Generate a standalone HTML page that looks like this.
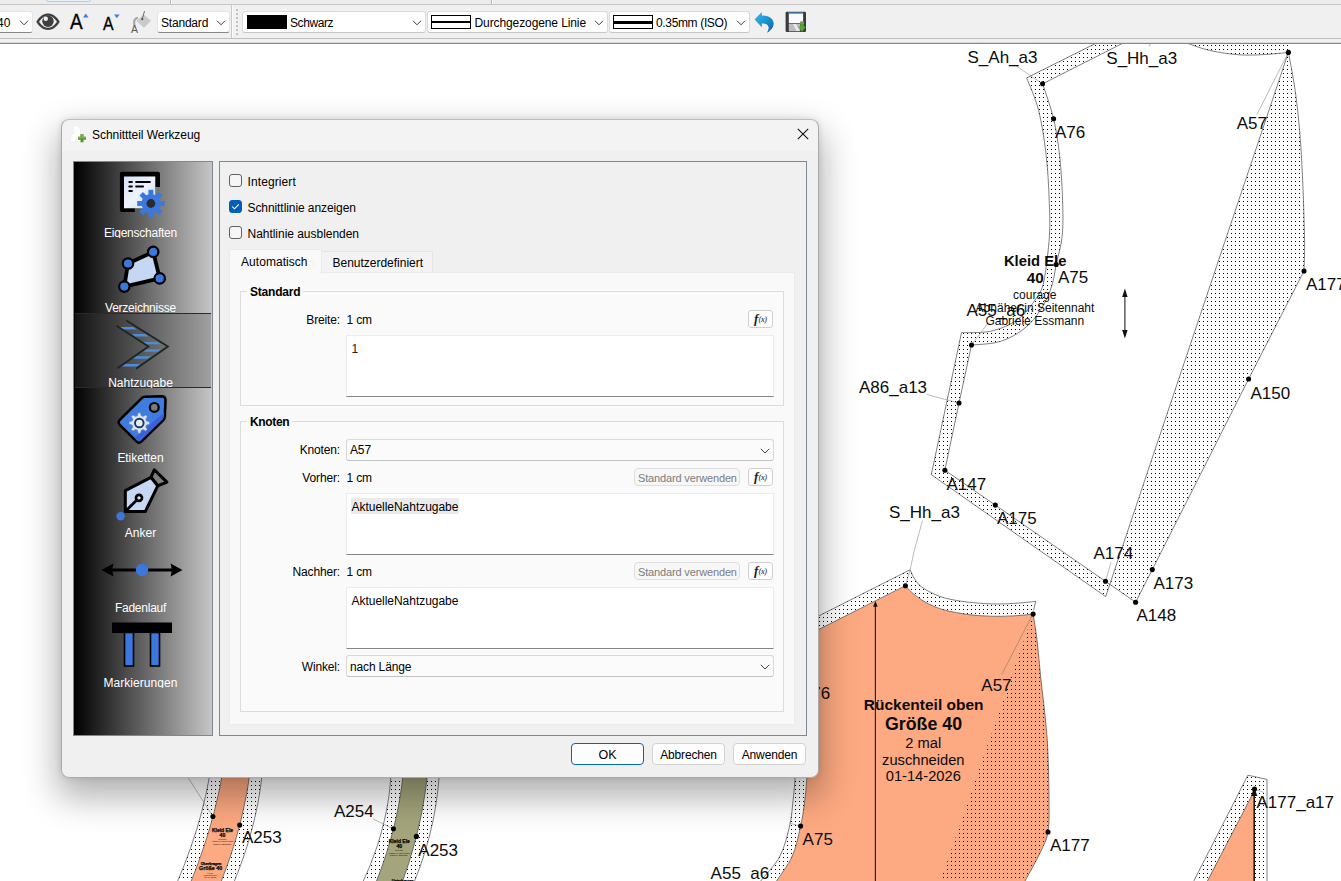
<!DOCTYPE html>
<html lang="de">
<head>
<meta charset="utf-8">
<title>Schnittteil Werkzeug</title>
<style>
*{box-sizing:border-box;margin:0;padding:0}
html,body{width:1341px;height:881px;overflow:hidden;background:#fff}
body{position:relative;font-family:"Liberation Sans",sans-serif;font-size:12px;color:#000}
.abs{position:absolute}
.t{position:absolute;white-space:nowrap;line-height:14px;height:14px}
/* toolbar */
#tb{position:absolute;left:0;top:0;width:1341px;height:44px;background:#f0f0f0}
#tb .combo{position:absolute;background:#fff;border:1px solid #dadada;border-bottom-color:#c6c6c6;border-radius:3px;height:22px}
#tb .combo.ed{border-color:#e6e6e6;border-bottom-color:#868686}
/* canvas */
#cv{position:absolute;left:0;top:0;width:1341px;height:881px}
#cv text{font-family:"Liberation Sans",sans-serif}
/* dialog */
#dlg{position:absolute;left:61px;top:119px;width:758px;height:659px;background:linear-gradient(#f3f3f3 0,#f3f3f3 31px,#f0f0f0 31px);border:1px solid #a9a9a9;border-top-color:#bdbdbd;border-radius:8px;box-shadow:0 16px 34px 4px rgba(0,0,0,.30),0 0 6px rgba(0,0,0,.12)}
#list{position:absolute;left:73px;top:161px;width:140px;height:575px;border:1px solid #7f8791;background:linear-gradient(90deg,#000 0%,#c6c6c6 100%);overflow:hidden}
.li{position:absolute;left:0;width:138px;height:75px}
.li .lb{position:absolute;left:-2.5px;width:138px;text-align:center;color:#fff;top:64px;line-height:14px;height:12px;overflow:hidden;font-size:12px;letter-spacing:-0.25px}
#panel{position:absolute;left:219px;top:161px;width:588px;height:575px;border:1px solid #7f8791;background:#f0f0f0}
.cb{position:absolute;width:13px;height:13px;border:1px solid #626262;border-radius:3px;background:#f6f6f6}
.cb.on{background:#005fb8;border-color:#005fb8}
.grp{position:absolute;border:1px solid #dcdcdc;background:#fafafa}
.grp b{position:absolute;background:#f9f9f9;padding:0 3px;font-weight:bold}
.ta{position:absolute;background:#fff;border:1px solid #ececec;border-bottom:1px solid #868686}
.cmb{position:absolute;background:#fbfbfb;border:1px solid #d9d9d9;border-bottom-color:#c2c2c2;border-radius:3px}
.btn{position:absolute;background:#fdfdfd;border:1px solid #d2d2d2;border-radius:4px;text-align:center}
.fx{position:absolute;width:25px;height:18px;background:#fdfdfd;border:1px solid #d0d0d0;border-radius:3px}
</style>
</head>
<body>
<!--CANVAS-->
<svg id="cv" width="1341" height="881" viewBox="0 0 1341 881">
<defs>
<pattern id="dots" x="0" y="0" width="4" height="4" patternUnits="userSpaceOnUse"><rect x="3" y="1" width="1" height="1" fill="#000"/></pattern>
</defs>
<path d="M1026.7 77.9L1122.5 30.0 L1288.4 30.0L1288.4 52.4C1289.7 59.6 1293.7 78.6 1295.9 95.8 C1298.1 113.0 1300.0 132.2 1301.4 155.6 C1302.8 179.0 1304.1 216.8 1304.5 236.0 C1304.9 255.2 1304.1 265.2 1304.0 271.0L1248.6 379.0 L1152.3 569.6 L1135.6 602.2 L1110.3 584.6 L1105.7 596.6 L931.3 474.7 L961.5 332.6C965.9 332.5 980.2 333.0 988.0 331.7 C995.8 330.4 1002.7 327.8 1008.5 325.0 C1014.3 322.2 1018.5 319.3 1023.0 315.0 C1027.5 310.7 1032.2 304.5 1035.7 299.0 C1039.2 293.5 1041.4 292.5 1043.7 282.0 C1046.0 271.5 1048.5 249.6 1049.4 236.0 C1050.3 222.4 1049.7 213.9 1049.2 200.5 C1048.7 187.1 1048.0 170.5 1046.2 155.6 C1044.5 140.7 1042.0 123.8 1038.7 110.8 C1035.5 97.8 1028.7 83.4 1026.7 77.9Z" fill="#fff"/>
<path d="M1026.7 77.9L1122.5 30.0 L1288.4 30.0L1288.4 52.4C1289.7 59.6 1293.7 78.6 1295.9 95.8 C1298.1 113.0 1300.0 132.2 1301.4 155.6 C1302.8 179.0 1304.1 216.8 1304.5 236.0 C1304.9 255.2 1304.1 265.2 1304.0 271.0L1248.6 379.0 L1152.3 569.6 L1135.6 602.2 L1110.3 584.6 L1105.7 596.6 L931.3 474.7 L961.5 332.6C965.9 332.5 980.2 333.0 988.0 331.7 C995.8 330.4 1002.7 327.8 1008.5 325.0 C1014.3 322.2 1018.5 319.3 1023.0 315.0 C1027.5 310.7 1032.2 304.5 1035.7 299.0 C1039.2 293.5 1041.4 292.5 1043.7 282.0 C1046.0 271.5 1048.5 249.6 1049.4 236.0 C1050.3 222.4 1049.7 213.9 1049.2 200.5 C1048.7 187.1 1048.0 170.5 1046.2 155.6 C1044.5 140.7 1042.0 123.8 1038.7 110.8 C1035.5 97.8 1028.7 83.4 1026.7 77.9Z" fill="url(#dots)"/>
<path d="M1042.6 83.8L1149.0 30.0 L1181.0 30.0 L1188.0 43.5C1191.7 44.7 1201.5 48.6 1210.0 50.5 C1218.5 52.4 1229.8 54.1 1239.0 54.8 C1248.2 55.5 1256.8 54.9 1265.0 54.5 C1273.2 54.1 1284.5 52.8 1288.4 52.4L1110.3 584.6 L1105.5 581.3 L944.9 470.2 L959.0 403.0 L971.5 345.0C975.8 344.6 989.5 344.2 997.2 342.3 C1004.9 340.4 1011.6 337.1 1017.6 333.3 C1023.6 329.5 1028.8 325.1 1033.5 319.6 C1038.2 314.1 1042.8 306.5 1046.0 300.3 C1049.2 294.1 1051.1 288.2 1052.8 282.2 C1054.5 276.2 1054.6 272.2 1056.2 264.5 C1057.8 256.8 1061.1 246.7 1062.2 236.0 C1063.3 225.3 1063.0 213.9 1062.6 200.5 C1062.2 187.1 1061.1 169.2 1059.6 155.6 C1058.1 142.0 1056.4 130.8 1053.6 118.8 C1050.8 106.8 1044.4 89.6 1042.6 83.8Z" fill="#fff"/>
<path d="M1026.7 77.9L1122.5 30.0" fill="none" stroke="#333" stroke-width="0.62"/>
<path d="M1042.6 83.8L1149.0 30.0" fill="none" stroke="#333" stroke-width="0.62"/>
<path d="M1026.7 77.9C1028.7 83.4 1035.5 97.8 1038.7 110.8 C1042.0 123.8 1044.5 140.7 1046.2 155.6 C1048.0 170.5 1048.7 187.1 1049.2 200.5 C1049.7 213.9 1050.3 222.4 1049.4 236.0 C1048.5 249.6 1046.0 271.5 1043.7 282.0 C1041.4 292.5 1039.2 293.5 1035.7 299.0 C1032.2 304.5 1027.5 310.7 1023.0 315.0 C1018.5 319.3 1014.3 322.2 1008.5 325.0 C1002.7 327.8 995.8 330.4 988.0 331.7 C980.2 333.0 965.9 332.5 961.5 332.6L931.3 474.7 L1105.7 596.6" fill="none" stroke="#333" stroke-width="0.62"/>
<path d="M1042.6 83.8C1044.4 89.6 1050.8 106.8 1053.6 118.8 C1056.4 130.8 1058.1 142.0 1059.6 155.6 C1061.1 169.2 1062.2 187.1 1062.6 200.5 C1063.0 213.9 1063.3 225.3 1062.2 236.0 C1061.1 246.7 1057.8 256.8 1056.2 264.5 C1054.6 272.2 1054.5 276.2 1052.8 282.2 C1051.1 288.2 1049.2 294.1 1046.0 300.3 C1042.8 306.5 1038.2 314.1 1033.5 319.6 C1028.8 325.1 1023.6 329.5 1017.6 333.3 C1011.6 337.1 1004.9 340.4 997.2 342.3 C989.5 344.2 975.8 344.6 971.5 345.0L959.0 403.0 L944.9 470.2 L1135.6 602.2 L1152.3 569.6 L1248.6 379.0 L1304.0 271.0C1304.1 265.2 1304.9 255.2 1304.5 236.0 C1304.1 216.8 1302.8 179.0 1301.4 155.6 C1300.0 132.2 1298.1 113.0 1295.9 95.8 C1293.7 78.6 1289.7 59.6 1288.4 52.4" fill="none" stroke="#333" stroke-width="0.62"/>
<path d="M1188.0 43.5C1191.7 44.7 1201.5 48.6 1210.0 50.5 C1218.5 52.4 1229.8 54.1 1239.0 54.8 C1248.2 55.5 1256.8 54.9 1265.0 54.5 C1273.2 54.1 1284.5 52.8 1288.4 52.4" fill="none" stroke="#333" stroke-width="0.62"/>
<path d="M1288.4 52.4L1105.7 596.6" fill="none" stroke="#333" stroke-width="0.62"/>
<path d="M1014.8 65L1042.6 83.8 M1149 46.5L1153 40 M1257 114.3L1288.4 52.4 M926.8 394.5L959 403 M988 323L971.5 345 M1111 562.3L1105.5 581.3" fill="none" stroke="#666" stroke-width="0.45"/>
<path d="M905.4 585.7C906.5 586.8 908.9 589.9 911.8 592.4 C914.7 594.9 919.3 598.5 923.0 600.8 C926.7 603.1 930.4 604.8 934.1 606.4 C937.8 608.0 941.6 609.3 945.3 610.3 C949.0 611.3 952.8 611.9 956.5 612.6 C960.2 613.3 964.0 614.0 967.7 614.5 C971.4 615.0 975.2 615.3 978.9 615.6 C982.6 615.9 986.4 616.1 990.1 616.2 C993.8 616.3 997.6 616.3 1001.3 616.3 C1005.0 616.2 1008.7 616.1 1012.4 615.9 C1016.1 615.7 1020.2 615.4 1023.6 615.1 C1027.0 614.8 1031.5 614.3 1033.1 614.1C1033.8 618.4 1035.7 629.0 1037.0 640.0 C1038.3 651.0 1039.6 666.7 1041.0 680.0 C1042.4 693.3 1044.4 708.3 1045.5 720.0 C1046.6 731.7 1047.2 736.7 1047.8 750.0 C1048.4 763.3 1049.0 786.3 1049.0 800.0 C1049.0 813.7 1049.5 823.2 1048.0 832.0 C1046.5 840.8 1043.8 844.8 1040.0 853.0 C1036.2 861.2 1027.5 876.3 1025.0 881.0L1025.0 900.0 L776.5 900.0 L776.5 881.0C779.1 876.8 788.3 865.1 792.3 856.0 C796.3 846.9 798.5 835.3 800.6 826.1 C802.7 816.9 803.7 809.2 804.7 801.0 C805.7 792.8 806.2 787.2 806.8 777.0 C807.4 766.8 808.2 746.2 808.5 740.0L808.5 600.0 L808.5 634.6Z" fill="#fda981"/>
<path d="M910.1 569.8C910.8 571.1 912.4 575.3 914.0 577.9 C915.6 580.5 917.2 583.0 919.6 585.2 C922.0 587.4 925.2 589.4 928.6 591.3 C932.0 593.2 936.0 595.0 939.7 596.4 C943.4 597.8 947.2 598.6 950.9 599.4 C954.6 600.2 958.4 600.8 962.1 601.4 C965.8 602.0 969.6 602.3 973.3 602.7 C977.0 603.1 980.8 603.4 984.5 603.6 C988.2 603.8 992.0 604.0 995.7 604.0 C999.4 604.0 1003.2 603.9 1006.9 603.8 C1010.6 603.6 1014.3 603.4 1018.0 603.1 C1021.7 602.8 1026.2 602.4 1029.2 602.1 C1032.2 601.8 1034.6 601.5 1035.7 601.4L1033.1 614.1C1031.5 614.3 1027.0 614.8 1023.6 615.1 C1020.2 615.4 1016.1 615.7 1012.4 615.9 C1008.7 616.1 1005.0 616.2 1001.3 616.3 C997.6 616.3 993.8 616.3 990.1 616.2 C986.4 616.1 982.6 615.9 978.9 615.6 C975.2 615.3 971.4 615.0 967.7 614.5 C964.0 614.0 960.2 613.3 956.5 612.6 C952.8 611.9 949.0 611.3 945.3 610.3 C941.6 609.3 937.8 608.0 934.1 606.4 C930.4 604.8 926.7 603.1 923.0 600.8 C919.3 598.5 914.7 594.9 911.8 592.4 C908.9 589.9 906.5 586.8 905.4 585.7L700.0 689.4 L700.0 675.9Z" fill="#fff"/>
<path d="M910.1 569.8C910.8 571.1 912.4 575.3 914.0 577.9 C915.6 580.5 917.2 583.0 919.6 585.2 C922.0 587.4 925.2 589.4 928.6 591.3 C932.0 593.2 936.0 595.0 939.7 596.4 C943.4 597.8 947.2 598.6 950.9 599.4 C954.6 600.2 958.4 600.8 962.1 601.4 C965.8 602.0 969.6 602.3 973.3 602.7 C977.0 603.1 980.8 603.4 984.5 603.6 C988.2 603.8 992.0 604.0 995.7 604.0 C999.4 604.0 1003.2 603.9 1006.9 603.8 C1010.6 603.6 1014.3 603.4 1018.0 603.1 C1021.7 602.8 1026.2 602.4 1029.2 602.1 C1032.2 601.8 1034.6 601.5 1035.7 601.4L1033.1 614.1C1031.5 614.3 1027.0 614.8 1023.6 615.1 C1020.2 615.4 1016.1 615.7 1012.4 615.9 C1008.7 616.1 1005.0 616.2 1001.3 616.3 C997.6 616.3 993.8 616.3 990.1 616.2 C986.4 616.1 982.6 615.9 978.9 615.6 C975.2 615.3 971.4 615.0 967.7 614.5 C964.0 614.0 960.2 613.3 956.5 612.6 C952.8 611.9 949.0 611.3 945.3 610.3 C941.6 609.3 937.8 608.0 934.1 606.4 C930.4 604.8 926.7 603.1 923.0 600.8 C919.3 598.5 914.7 594.9 911.8 592.4 C908.9 589.9 906.5 586.8 905.4 585.7L700.0 689.4 L700.0 675.9Z" fill="url(#dots)"/>
<path d="M1033.1 614.1C1033.8 618.4 1035.7 629.0 1037.0 640.0 C1038.3 651.0 1039.6 666.7 1041.0 680.0 C1042.4 693.3 1044.4 708.3 1045.5 720.0 C1046.6 731.7 1047.2 736.7 1047.8 750.0 C1048.4 763.3 1049.0 786.3 1049.0 800.0 C1049.0 813.7 1049.5 823.2 1048.0 832.0 C1046.5 840.8 1043.8 844.8 1040.0 853.0 C1036.2 861.2 1027.5 876.3 1025.0 881.0L940.5 881.0Z" fill="url(#dots)"/>
<path d="M796.5 740.0C796.3 746.2 795.7 766.8 795.1 777.0 C794.5 787.2 793.9 792.8 793.0 801.0 C792.1 809.2 791.8 816.8 789.6 826.0 C787.4 835.2 784.8 846.8 780.0 856.0 C775.2 865.2 763.9 876.8 760.7 881.0L776.5 881.0C779.1 876.8 788.3 865.1 792.3 856.0 C796.3 846.9 798.5 835.3 800.6 826.1 C802.7 816.9 803.7 809.2 804.7 801.0 C805.7 792.8 806.2 787.2 806.8 777.0 C807.4 766.8 808.2 746.2 808.5 740.0Z" fill="#fff"/>
<path d="M796.5 740.0C796.3 746.2 795.7 766.8 795.1 777.0 C794.5 787.2 793.9 792.8 793.0 801.0 C792.1 809.2 791.8 816.8 789.6 826.0 C787.4 835.2 784.8 846.8 780.0 856.0 C775.2 865.2 763.9 876.8 760.7 881.0L776.5 881.0C779.1 876.8 788.3 865.1 792.3 856.0 C796.3 846.9 798.5 835.3 800.6 826.1 C802.7 816.9 803.7 809.2 804.7 801.0 C805.7 792.8 806.2 787.2 806.8 777.0 C807.4 766.8 808.2 746.2 808.5 740.0Z" fill="url(#dots)"/>
<path d="M796.5 740.0C796.3 746.2 795.7 766.8 795.1 777.0 C794.5 787.2 793.9 792.8 793.0 801.0 C792.1 809.2 791.8 816.8 789.6 826.0 C787.4 835.2 784.8 846.8 780.0 856.0 C775.2 865.2 763.9 876.8 760.7 881.0" fill="none" stroke="#333" stroke-width="0.62"/>
<path d="M808.5 740.0C808.2 746.2 807.4 766.8 806.8 777.0 C806.2 787.2 805.7 792.8 804.7 801.0 C803.7 809.2 802.7 816.9 800.6 826.1 C798.5 835.3 796.3 846.9 792.3 856.0 C788.3 865.1 779.1 876.8 776.5 881.0" fill="none" stroke="#333" stroke-width="0.62"/>
<path d="M789.6 823.2L800.6 826.1" fill="none" stroke="#666" stroke-width="0.45"/>
<path d="M700.0 675.9L910.1 569.8C910.8 571.1 912.4 575.3 914.0 577.9 C915.6 580.5 917.2 583.0 919.6 585.2 C922.0 587.4 925.2 589.4 928.6 591.3 C932.0 593.2 936.0 595.0 939.7 596.4 C943.4 597.8 947.2 598.6 950.9 599.4 C954.6 600.2 958.4 600.8 962.1 601.4 C965.8 602.0 969.6 602.3 973.3 602.7 C977.0 603.1 980.8 603.4 984.5 603.6 C988.2 603.8 992.0 604.0 995.7 604.0 C999.4 604.0 1003.2 603.9 1006.9 603.8 C1010.6 603.6 1014.3 603.4 1018.0 603.1 C1021.7 602.8 1026.2 602.4 1029.2 602.1 C1032.2 601.8 1034.6 601.5 1035.7 601.4L1033.7 610.3" fill="none" stroke="#333" stroke-width="0.62"/>
<path d="M700.0 689.4L905.4 585.7C906.5 586.8 908.9 589.9 911.8 592.4 C914.7 594.9 919.3 598.5 923.0 600.8 C926.7 603.1 930.4 604.8 934.1 606.4 C937.8 608.0 941.6 609.3 945.3 610.3 C949.0 611.3 952.8 611.9 956.5 612.6 C960.2 613.3 964.0 614.0 967.7 614.5 C971.4 615.0 975.2 615.3 978.9 615.6 C982.6 615.9 986.4 616.1 990.1 616.2 C993.8 616.3 997.6 616.3 1001.3 616.3 C1005.0 616.2 1008.7 616.1 1012.4 615.9 C1016.1 615.7 1020.2 615.4 1023.6 615.1 C1027.0 614.8 1031.5 614.3 1033.1 614.1C1033.8 618.4 1035.7 629.0 1037.0 640.0 C1038.3 651.0 1039.6 666.7 1041.0 680.0 C1042.4 693.3 1044.4 708.3 1045.5 720.0 C1046.6 731.7 1047.2 736.7 1047.8 750.0 C1048.4 763.3 1049.0 786.3 1049.0 800.0 C1049.0 813.7 1049.5 823.2 1048.0 832.0 C1046.5 840.8 1043.8 844.8 1040.0 853.0 C1036.2 861.2 1027.5 876.3 1025.0 881.0" fill="none" stroke="#333" stroke-width="0.62"/>
<path d="M914.4 550L910.1 569.8L905.4 585.7 M922.5 520.5L914.4 550 M1001.8 674.4L1032.8 614" fill="none" stroke="#666" stroke-width="0.45"/>
<path d="M875.4 605V881" fill="none" stroke="#222" stroke-width="1.15"/>
<path d="M875.4 601L877.7 606.8H873.1Z" fill="#111"/>
<path d="M1247.9 775.2L1267 779.4V881H1193.8Z" fill="#fff"/>
<path d="M1247.9 775.2L1267 779.4V881H1193.8Z" fill="url(#dots)"/>
<path d="M1254.2 791L1254.2 881H1207.4Z" fill="#fda981"/>
<path d="M1193.8 881L1247.9 775.2L1267 779.4V881" fill="none" stroke="#333" stroke-width="0.62"/>
<path d="M1207.4 881L1254.2 791" fill="none" stroke="#333" stroke-width="0.62"/>
<path d="M1254.2 793V881" fill="none" stroke="#111" stroke-width="1.5"/>
<path d="M1254.2 787L1257.3 796H1251.1Z" fill="#111"/>
<path d="M1254.5 789L1264 792.5" fill="none" stroke="#666" stroke-width="0.45"/>
<path d="M212.0 759.9C211.6 762.8 210.3 771.4 209.3 777.2 C208.3 783.0 207.1 788.7 205.9 794.5 C204.6 800.3 203.2 806.0 201.7 811.8 C200.2 817.6 198.5 823.3 196.8 829.1 C195.0 834.9 193.1 840.6 191.1 846.4 C189.1 852.2 187.0 857.9 184.8 863.7 C182.5 869.5 178.9 878.1 177.7 881.0L234.4 881.0C235.5 878.1 239.0 869.5 241.1 863.7 C243.2 857.9 245.2 852.2 247.0 846.4 C248.8 840.6 250.5 834.9 252.0 829.1 C253.5 823.3 254.9 817.6 256.1 811.8 C257.4 806.0 258.5 800.3 259.4 794.5 C260.4 788.7 261.1 783.0 261.8 777.2 C262.5 771.4 263.1 762.8 263.3 759.9Z" fill="#fff"/>
<path d="M212.0 759.9C211.6 762.8 210.3 771.4 209.3 777.2 C208.3 783.0 207.1 788.7 205.9 794.5 C204.6 800.3 203.2 806.0 201.7 811.8 C200.2 817.6 198.5 823.3 196.8 829.1 C195.0 834.9 193.1 840.6 191.1 846.4 C189.1 852.2 187.0 857.9 184.8 863.7 C182.5 869.5 178.9 878.1 177.7 881.0L234.4 881.0C235.5 878.1 239.0 869.5 241.1 863.7 C243.2 857.9 245.2 852.2 247.0 846.4 C248.8 840.6 250.5 834.9 252.0 829.1 C253.5 823.3 254.9 817.6 256.1 811.8 C257.4 806.0 258.5 800.3 259.4 794.5 C260.4 788.7 261.1 783.0 261.8 777.2 C262.5 771.4 263.1 762.8 263.3 759.9Z" fill="url(#dots)"/>
<path d="M224.7 759.9C224.2 762.8 222.9 771.4 221.8 777.2 C220.7 783.0 219.6 788.7 218.3 794.5 C217.0 800.3 215.6 806.0 214.2 811.8 C212.7 817.6 211.1 823.3 209.4 829.1 C207.7 834.9 205.9 840.6 203.9 846.4 C202.0 852.2 200.0 857.9 197.9 863.7 C195.8 869.5 192.3 878.1 191.2 881.0L221.3 881.0C222.4 878.1 225.8 869.5 227.8 863.7 C229.9 857.9 231.8 852.2 233.6 846.4 C235.4 840.6 237.1 834.9 238.6 829.1 C240.2 823.3 241.6 817.6 242.9 811.8 C244.2 806.0 245.4 800.3 246.5 794.5 C247.5 788.7 248.5 783.0 249.3 777.2 C250.1 771.4 251.0 762.8 251.4 759.9Z" fill="#fda981"/>
<path d="M212.0 759.9C211.6 762.8 210.3 771.4 209.3 777.2 C208.3 783.0 207.1 788.7 205.9 794.5 C204.6 800.3 203.2 806.0 201.7 811.8 C200.2 817.6 198.5 823.3 196.8 829.1 C195.0 834.9 193.1 840.6 191.1 846.4 C189.1 852.2 187.0 857.9 184.8 863.7 C182.5 869.5 178.9 878.1 177.7 881.0" fill="none" stroke="#333" stroke-width="0.62"/>
<path d="M224.7 759.9C224.2 762.8 222.9 771.4 221.8 777.2 C220.7 783.0 219.6 788.7 218.3 794.5 C217.0 800.3 215.6 806.0 214.2 811.8 C212.7 817.6 211.1 823.3 209.4 829.1 C207.7 834.9 205.9 840.6 203.9 846.4 C202.0 852.2 200.0 857.9 197.9 863.7 C195.8 869.5 192.3 878.1 191.2 881.0" fill="none" stroke="#333" stroke-width="0.62"/>
<path d="M251.4 759.9C251.0 762.8 250.1 771.4 249.3 777.2 C248.5 783.0 247.5 788.7 246.5 794.5 C245.4 800.3 244.2 806.0 242.9 811.8 C241.6 817.6 240.2 823.3 238.6 829.1 C237.1 834.9 235.4 840.6 233.6 846.4 C231.8 852.2 229.9 857.9 227.8 863.7 C225.8 869.5 222.4 878.1 221.3 881.0" fill="none" stroke="#333" stroke-width="0.62"/>
<path d="M263.3 759.9C263.1 762.8 262.5 771.4 261.8 777.2 C261.1 783.0 260.4 788.7 259.4 794.5 C258.5 800.3 257.4 806.0 256.1 811.8 C254.9 817.6 253.5 823.3 252.0 829.1 C250.5 834.9 248.8 840.6 247.0 846.4 C245.2 852.2 243.2 857.9 241.1 863.7 C239.0 869.5 235.5 878.1 234.4 881.0" fill="none" stroke="#333" stroke-width="0.62"/>
<path d="M391.4 759.9C391.3 762.8 391.2 771.4 390.8 777.2 C390.4 783.0 389.8 788.7 389.1 794.5 C388.3 800.3 387.4 806.0 386.2 811.8 C385.1 817.6 383.7 823.3 382.2 829.1 C380.7 834.9 379.0 840.6 377.1 846.4 C375.1 852.2 373.0 857.9 370.7 863.7 C368.5 869.5 364.5 878.1 363.3 881.0L414.6 881.0C415.7 878.1 419.1 869.5 421.1 863.7 C423.1 857.9 424.9 852.2 426.6 846.4 C428.3 840.6 429.8 834.9 431.1 829.1 C432.5 823.3 433.7 817.6 434.7 811.8 C435.8 806.0 436.6 800.3 437.3 794.5 C438.1 788.7 438.6 783.0 439.0 777.2 C439.4 771.4 439.6 762.8 439.7 759.9Z" fill="#fff"/>
<path d="M391.4 759.9C391.3 762.8 391.2 771.4 390.8 777.2 C390.4 783.0 389.8 788.7 389.1 794.5 C388.3 800.3 387.4 806.0 386.2 811.8 C385.1 817.6 383.7 823.3 382.2 829.1 C380.7 834.9 379.0 840.6 377.1 846.4 C375.1 852.2 373.0 857.9 370.7 863.7 C368.5 869.5 364.5 878.1 363.3 881.0L414.6 881.0C415.7 878.1 419.1 869.5 421.1 863.7 C423.1 857.9 424.9 852.2 426.6 846.4 C428.3 840.6 429.8 834.9 431.1 829.1 C432.5 823.3 433.7 817.6 434.7 811.8 C435.8 806.0 436.6 800.3 437.3 794.5 C438.1 788.7 438.6 783.0 439.0 777.2 C439.4 771.4 439.6 762.8 439.7 759.9Z" fill="url(#dots)"/>
<path d="M404.2 759.9C403.9 762.8 403.3 771.4 402.7 777.2 C402.1 783.0 401.3 788.7 400.4 794.5 C399.5 800.3 398.5 806.0 397.3 811.8 C396.1 817.6 394.8 823.3 393.3 829.1 C391.9 834.9 390.3 840.6 388.5 846.4 C386.8 852.2 384.9 857.9 382.9 863.7 C380.9 869.5 377.6 878.1 376.5 881.0L402.7 881.0C403.7 878.1 406.7 869.5 408.6 863.7 C410.4 857.9 412.1 852.2 413.7 846.4 C415.3 840.6 416.8 834.9 418.2 829.1 C419.5 823.3 420.8 817.6 421.9 811.8 C423.0 806.0 424.0 800.3 424.9 794.5 C425.7 788.7 426.5 783.0 427.1 777.2 C427.7 771.4 428.4 762.8 428.6 759.9Z" fill="#a4a57c"/>
<path d="M391.4 759.9C391.3 762.8 391.2 771.4 390.8 777.2 C390.4 783.0 389.8 788.7 389.1 794.5 C388.3 800.3 387.4 806.0 386.2 811.8 C385.1 817.6 383.7 823.3 382.2 829.1 C380.7 834.9 379.0 840.6 377.1 846.4 C375.1 852.2 373.0 857.9 370.7 863.7 C368.5 869.5 364.5 878.1 363.3 881.0" fill="none" stroke="#333" stroke-width="0.62"/>
<path d="M404.2 759.9C403.9 762.8 403.3 771.4 402.7 777.2 C402.1 783.0 401.3 788.7 400.4 794.5 C399.5 800.3 398.5 806.0 397.3 811.8 C396.1 817.6 394.8 823.3 393.3 829.1 C391.9 834.9 390.3 840.6 388.5 846.4 C386.8 852.2 384.9 857.9 382.9 863.7 C380.9 869.5 377.6 878.1 376.5 881.0" fill="none" stroke="#333" stroke-width="0.62"/>
<path d="M428.6 759.9C428.4 762.8 427.7 771.4 427.1 777.2 C426.5 783.0 425.7 788.7 424.9 794.5 C424.0 800.3 423.0 806.0 421.9 811.8 C420.8 817.6 419.5 823.3 418.2 829.1 C416.8 834.9 415.3 840.6 413.7 846.4 C412.1 852.2 410.4 857.9 408.6 863.7 C406.7 869.5 403.7 878.1 402.7 881.0" fill="none" stroke="#333" stroke-width="0.62"/>
<path d="M439.7 759.9C439.6 762.8 439.4 771.4 439.0 777.2 C438.6 783.0 438.1 788.7 437.3 794.5 C436.6 800.3 435.8 806.0 434.7 811.8 C433.7 817.6 432.5 823.3 431.1 829.1 C429.8 834.9 428.3 840.6 426.6 846.4 C424.9 852.2 423.1 857.9 421.1 863.7 C419.1 869.5 415.7 878.1 414.6 881.0" fill="none" stroke="#333" stroke-width="0.62"/>
<path d="M187.9 777.2L212.9 816.5 M372.9 818.9L393.4 828.8" fill="none" stroke="#666" stroke-width="0.45"/>
<circle cx="1042.6" cy="83.8" r="2.55" fill="#000"/>
<circle cx="1053.6" cy="118.8" r="2.55" fill="#000"/>
<circle cx="1288.4" cy="52.4" r="2.55" fill="#000"/>
<circle cx="1056.2" cy="264.5" r="2.55" fill="#000"/>
<circle cx="971.5" cy="345.0" r="2.55" fill="#000"/>
<circle cx="959.0" cy="403.0" r="2.55" fill="#000"/>
<circle cx="944.9" cy="470.2" r="2.55" fill="#000"/>
<circle cx="995.3" cy="505.1" r="2.55" fill="#000"/>
<circle cx="1105.5" cy="581.3" r="2.55" fill="#000"/>
<circle cx="1152.3" cy="569.6" r="2.55" fill="#000"/>
<circle cx="1135.6" cy="602.2" r="2.55" fill="#000"/>
<circle cx="1248.6" cy="379.0" r="2.55" fill="#000"/>
<circle cx="1304.0" cy="271.0" r="2.55" fill="#000"/>
<circle cx="905.4" cy="585.7" r="2.55" fill="#000"/>
<circle cx="1033.1" cy="614.1" r="2.55" fill="#000"/>
<circle cx="1048.0" cy="832.0" r="2.55" fill="#000"/>
<circle cx="800.6" cy="826.1" r="2.55" fill="#000"/>
<circle cx="1254.5" cy="789.0" r="2.55" fill="#000"/>
<circle cx="212.9" cy="816.5" r="2.55" fill="#000"/>
<circle cx="239.7" cy="825.1" r="2.55" fill="#000"/>
<circle cx="393.4" cy="828.8" r="2.55" fill="#000"/>
<circle cx="416.4" cy="836.4" r="2.55" fill="#000"/>
<path d="M1124.9 294V334" fill="none" stroke="#3c3c3c" stroke-width="1.25"/>
<path d="M1124.9 288.5L1127.6 297H1122.2Z M1124.9 338.5L1127.6 330H1122.2Z" fill="#111"/>
<text x="967.5" y="63.1" font-size="17" fill="#0c0c0c" >S_Ah_a3</text>
<text x="1106.3" y="64.4" font-size="17" fill="#0c0c0c" >S_Hh_a3</text>
<text x="1055.0" y="137.7" font-size="17" fill="#0c0c0c" >A76</text>
<text x="1236.7" y="128.7" font-size="17" fill="#0c0c0c" >A57</text>
<text x="1058.0" y="283.3" font-size="17" fill="#0c0c0c" >A75</text>
<text x="966.5" y="316.0" font-size="17" fill="#0c0c0c" >A55_a6</text>
<text x="1306.0" y="290.0" font-size="17" fill="#0c0c0c" >A177</text>
<text x="1250.5" y="398.5" font-size="17" fill="#0c0c0c" >A150</text>
<text x="859.0" y="393.0" font-size="17" fill="#0c0c0c" >A86_a13</text>
<text x="946.5" y="490.0" font-size="17" fill="#0c0c0c" >A147</text>
<text x="997.0" y="523.5" font-size="17" fill="#0c0c0c" >A175</text>
<text x="1093.5" y="559.0" font-size="17" fill="#0c0c0c" >A174</text>
<text x="1153.5" y="588.5" font-size="17" fill="#0c0c0c" >A173</text>
<text x="1136.5" y="620.5" font-size="17" fill="#0c0c0c" >A148</text>
<text x="889.0" y="518.0" font-size="17" fill="#0c0c0c" >S_Hh_a3</text>
<text x="981.3" y="691.2" font-size="17" fill="#0c0c0c" >A57</text>
<text x="1050.0" y="851.0" font-size="17" fill="#0c0c0c" >A177</text>
<text x="802.6" y="845.0" font-size="17" fill="#0c0c0c" >A75</text>
<text x="710.6" y="878.8" font-size="17" fill="#0c0c0c" >A55_a6</text>
<text x="800.0" y="698.5" font-size="17" fill="#0c0c0c" >A76</text>
<text x="1256.5" y="807.6" font-size="17" fill="#0c0c0c" >A177_a17</text>
<text x="242.0" y="843.4" font-size="17" fill="#0c0c0c" >A253</text>
<text x="334.0" y="816.5" font-size="17" fill="#0c0c0c" >A254</text>
<text x="418.3" y="855.5" font-size="17" fill="#0c0c0c" >A253</text>
<text x="1035.2" y="265.9" font-size="14.8" fill="#0c0c0c" text-anchor="middle" font-weight="bold">Kleid Ele</text>
<text x="1035.2" y="282.9" font-size="15.3" fill="#0c0c0c" text-anchor="middle" font-weight="bold">40</text>
<text x="1034.8" y="298.5" font-size="12" fill="#0c0c0c" text-anchor="middle">courage</text>
<text x="1035.0" y="311.6" font-size="12" fill="#0c0c0c" text-anchor="middle">Abnäher in Seitennaht</text>
<text x="1034.8" y="325.3" font-size="12" fill="#0c0c0c" text-anchor="middle">Gabriele Essmann</text>
<text x="923.7" y="709.5" font-size="15.5" fill="#0c0c0c" text-anchor="middle" font-weight="bold">Rückenteil oben</text>
<text x="923.5" y="730.3" font-size="17.8" fill="#0c0c0c" text-anchor="middle" font-weight="bold">Größe 40</text>
<text x="923.3" y="748.4" font-size="14.7" fill="#0c0c0c" text-anchor="middle">2 mal</text>
<text x="923.3" y="765.0" font-size="14.7" fill="#0c0c0c" text-anchor="middle">zuschneiden</text>
<text x="923.3" y="781.0" font-size="14.7" fill="#0c0c0c" text-anchor="middle">01-14-2026</text>
<text x="222.5" y="831.8" font-size="5" fill="#0c0c0c" text-anchor="middle" font-weight="bold" stroke="#000" stroke-width="0.25">Kleid Ele</text>
<text x="222.5" y="836.6" font-size="5.2" fill="#0c0c0c" text-anchor="middle" font-weight="bold" stroke="#000" stroke-width="0.25">40</text>
<text x="222.3" y="840.1" font-size="2.3" fill="#0c0c0c" text-anchor="middle">courage</text>
<text x="222.0" y="842.4" font-size="2.2" fill="#0c0c0c" text-anchor="middle">Abnäher in Seitennaht</text>
<text x="222.0" y="845.2" font-size="2.2" fill="#0c0c0c" text-anchor="middle">Gabriele Essmann</text>
<text x="211.0" y="864.6" font-size="3.7" fill="#0c0c0c" text-anchor="middle" font-weight="bold" stroke="#000" stroke-width="0.25">Oberkragen</text>
<text x="210.6" y="869.5" font-size="5.3" fill="#0c0c0c" text-anchor="middle" font-weight="bold" stroke="#000" stroke-width="0.25">Größe 40</text>
<text x="210.2" y="873.8" font-size="2.4" fill="#0c0c0c" text-anchor="middle">1 mal</text>
<text x="210.2" y="876.0" font-size="2.4" fill="#0c0c0c" text-anchor="middle">zuschneiden</text>
<text x="210.2" y="878.2" font-size="2.4" fill="#0c0c0c" text-anchor="middle">01-14-2026</text>
<text x="399.3" y="842.7" font-size="5" fill="#0c0c0c" text-anchor="middle" font-weight="bold" stroke="#000" stroke-width="0.25">Kleid Ele</text>
<text x="399.3" y="847.9" font-size="5.2" fill="#0c0c0c" text-anchor="middle" font-weight="bold" stroke="#000" stroke-width="0.25">40</text>
<text x="399.1" y="851.2" font-size="2.3" fill="#0c0c0c" text-anchor="middle">courage</text>
<text x="398.8" y="853.6" font-size="2.2" fill="#0c0c0c" text-anchor="middle">Abnäher in Seitennaht</text>
<text x="398.8" y="856.4" font-size="2.2" fill="#0c0c0c" text-anchor="middle">Gabriele Essmann</text>
<text x="402.6" y="881.8" font-size="3.7" fill="#0c0c0c" text-anchor="middle" font-weight="bold" stroke="#000" stroke-width="0.25">Unterkragen</text>
</svg>
<!--TOOLBAR-->
<div id="tb">
<div class="abs" style="left:0;top:0;width:1341px;height:4px;background:#ececec"></div>
<div class="abs" style="left:0;top:4px;width:1341px;height:1px;background:#c6c6c6"></div>
<div class="abs" style="left:170px;top:0;width:1px;height:4px;background:#b5b5b5"></div>
<div class="abs" style="left:171px;top:0;width:1px;height:4px;background:#fff"></div>
<div class="abs" style="left:491px;top:0;width:1px;height:4px;background:#b5b5b5"></div>
<div class="abs" style="left:492px;top:0;width:1px;height:4px;background:#fff"></div>
<div class="abs" style="left:46px;top:-3px;width:45px;height:5px;border:1px solid #99d1ff;border-radius:3px;background:#e5f1fb"></div>
<div class="abs" style="left:0;top:38px;width:1341px;height:1px;background:#bfbfbf"></div>
<div class="abs" style="left:0;top:39px;width:1341px;height:3px;background:#f0f0f0"></div>
<div class="abs" style="left:0;top:42px;width:1341px;height:1px;background:#d9dbdf"></div><div class="abs" style="left:0;top:43px;width:1341px;height:1px;background:#7e8693"></div>
<div class="abs" style="left:231px;top:5px;width:1px;height:33px;background:#c9c9c9"></div>
<div class="abs" style="left:232px;top:5px;width:1px;height:33px;background:#fbfbfb"></div>
<svg class="abs" style="left:235px;top:8px" width="4" height="30" viewBox="0 0 4 30"><rect x="1" y="1" width="2" height="2" fill="#c2c2c2"/><rect x="0" y="0" width="1" height="1" fill="#fff"/><rect x="1" y="5" width="2" height="2" fill="#c2c2c2"/><rect x="0" y="4" width="1" height="1" fill="#fff"/><rect x="1" y="9" width="2" height="2" fill="#c2c2c2"/><rect x="0" y="8" width="1" height="1" fill="#fff"/><rect x="1" y="13" width="2" height="2" fill="#c2c2c2"/><rect x="0" y="12" width="1" height="1" fill="#fff"/><rect x="1" y="17" width="2" height="2" fill="#c2c2c2"/><rect x="0" y="16" width="1" height="1" fill="#fff"/><rect x="1" y="21" width="2" height="2" fill="#c2c2c2"/><rect x="0" y="20" width="1" height="1" fill="#fff"/><rect x="1" y="25" width="2" height="2" fill="#c2c2c2"/><rect x="0" y="24" width="1" height="1" fill="#fff"/></svg>
<!-- combo 40 -->
<div class="combo ed" style="left:-6px;top:11px;width:39px"></div>
<div class="t" style="left:-3px;top:16px">40</div>
<svg class="abs" style="left:19px;top:20px" width="10" height="6" viewBox="0 0 10 6"><path d="M1 0.8L5 4.8L9 0.8" fill="none" stroke="#3c3c3c" stroke-width="1"/></svg>
<!-- eye -->
<svg class="abs" style="left:36px;top:13px" width="24" height="18" viewBox="0 0 24 18"><path d="M0.3 8.8C4 2.6 8 0.6 12 0.6S20 2.6 23.7 8.8C20 15 16 17 12 17S4 15 0.3 8.8Z" fill="#3f3f3f"/><path d="M3 8.8C6 4.4 9 2.8 12 2.8S18 4.4 21 8.8C18 13.2 15 14.8 12 14.8S6 13.2 3 8.8Z" fill="#f0f0f0"/><circle cx="12" cy="8.2" r="5.7" fill="#3f3f3f"/><circle cx="9.8" cy="5.8" r="2.2" fill="#f0f0f0"/></svg>
<!-- A up -->
<div class="t" style="left:70px;top:11px;-webkit-text-stroke:0.35px #000;transform:scaleX(.86);transform-origin:0 0;font-size:22px;line-height:22px;height:22px">A</div>
<svg class="abs" style="left:83px;top:13px" width="6" height="5" viewBox="0 0 6 5"><path d="M0 4.5L2.8 0.5L5.6 4.5Z" fill="#3c7fe6"/></svg>
<!-- A down -->
<div class="t" style="left:103px;top:15px;-webkit-text-stroke:0.3px #000;transform:scaleX(.9);transform-origin:0 0;font-size:17.5px;line-height:18px;height:18px">A</div>
<svg class="abs" style="left:113.500px;top:13.500px" width="6" height="5" viewBox="0 0 6 5"><path d="M0 0.5L2.8 4.3L5.6 0.5Z" fill="#3c7fe6"/></svg>
<!-- bucket -->
<svg class="abs" style="left:130px;top:10px" width="23" height="24" viewBox="0 0 23 24"><path d="M6.400 10.900L13.600 4.400L21.100 10.700L14 17.800Z" fill="#cacaca"/><path d="M4.400 15.500C3.600 11 4.200 8.200 8 7.800" fill="none" stroke="#a6a6a6" stroke-width="2.200"/><path d="M14.500 1.100L12.300 9" fill="none" stroke="#6a6a6a" stroke-width="1"/><circle cx="12.200" cy="9.100" r="1.200" fill="#5a5a5a"/><text x="0.900" y="22.900" font-size="10.500" fill="#585858" style="font-family:'Liberation Sans',sans-serif">A</text></svg>
<!-- Standard combo -->
<div class="combo ed" style="left:157px;top:11px;width:73px"></div>
<div class="t" style="left:161px;top:16px;letter-spacing:-0.2px">Standard</div>
<svg class="abs" style="left:216px;top:20px" width="10" height="6" viewBox="0 0 10 6"><path d="M1 0.8L5 4.8L9 0.8" fill="none" stroke="#3c3c3c" stroke-width="1"/></svg>
<!-- Schwarz combo -->
<div class="combo" style="left:242px;top:11px;width:184px"></div>
<div class="abs" style="left:247px;top:15px;width:40px;height:14px;background:#000"></div>
<div class="t" style="left:290px;top:16px;letter-spacing:-0.4px">Schwarz</div>
<svg class="abs" style="left:412px;top:20px" width="10" height="6" viewBox="0 0 10 6"><path d="M1 0.8L5 4.8L9 0.8" fill="none" stroke="#3c3c3c" stroke-width="1"/></svg>
<!-- Linie combo -->
<div class="combo" style="left:427px;top:11px;width:181px"></div>
<div class="abs" style="left:431px;top:15px;width:40px;height:14px;background:#fff;border:1px solid #000"></div>
<div class="abs" style="left:431px;top:21px;width:40px;height:2px;background:#000"></div>
<div class="t" style="left:474.500px;top:16px;letter-spacing:-0.1px">Durchgezogene Linie</div>
<svg class="abs" style="left:593.500px;top:20px" width="10" height="6" viewBox="0 0 10 6"><path d="M1 0.8L5 4.8L9 0.8" fill="none" stroke="#3c3c3c" stroke-width="1"/></svg>
<!-- 0.35 combo -->
<div class="combo" style="left:609px;top:11px;width:141px"></div>
<div class="abs" style="left:613px;top:15px;width:40px;height:14px;background:#fff;border:1px solid #000"></div>
<div class="abs" style="left:613px;top:21px;width:40px;height:3px;background:#000"></div>
<div class="t" style="left:656px;top:16px;letter-spacing:-0.35px">0.35mm (ISO)</div>
<svg class="abs" style="left:736px;top:20px" width="10" height="6" viewBox="0 0 10 6"><path d="M1 0.8L5 4.8L9 0.8" fill="none" stroke="#3c3c3c" stroke-width="1"/></svg>
<!-- undo -->
<svg class="abs" style="left:754px;top:11px" width="21" height="23" viewBox="0 0 21 23"><defs><linearGradient id="ug" x1="0" y1="0" x2="1" y2="1"><stop offset="0" stop-color="#3fb4e6"/><stop offset="0.45" stop-color="#1d9ad6"/><stop offset="1" stop-color="#0f5f9f"/></linearGradient></defs><path d="M0.600 8.500L7.800 0.900V4.600C14.500 4.300 19.500 7.500 19.600 12.500C19.600 16.500 16.500 20 13 21.800C15 18.500 15.200 15.500 13.500 14C12 12.700 10 12.500 7.800 12.500V16.200Z" fill="url(#ug)"/></svg>
<!-- save -->
<svg class="abs" style="left:785px;top:11px" width="22" height="22" viewBox="0 0 22 22"><rect x="0.600" y="0.800" width="20.400" height="20.200" rx="1.200" fill="#3a3a3a"/><rect x="3.800" y="1.100" width="14.300" height="10.900" fill="#fbfbfd"/><rect x="3.800" y="1.100" width="14.300" height="1.500" fill="#2c639c"/><rect x="3.800" y="12.600" width="11.400" height="7.700" fill="#bdbdbf"/><path d="M8 13L11 13L14.500 20L11.500 20Z" fill="#e9e9f2"/><path d="M15.300 10.600H18.800V15.600H21L17 21L13.200 15.600H15.300Z" fill="#52a82c"/><path d="M15.300 10.600H18.800V13H15.300Z" fill="#6f9f58"/></svg>
</div>
<!--DIALOG-->
<div id="dlg"></div>
<div id="list">
<div class="abs" style="left:1px;top:151px;width:136px;height:75px;background:rgba(70,70,70,.28);border-top:1px solid #2a2a2a;border-bottom:1px solid #2a2a2a"></div>
<!-- 1 Eigenschaften -->
<div class="li" style="top:0">
<svg class="abs" style="left:45px;top:9px" width="48" height="48" viewBox="0 0 48 48">
<defs><linearGradient id="g1" x1="0" y1="0" x2="1" y2="1"><stop offset="0" stop-color="#d5e2f8"/><stop offset="0.5" stop-color="#eef3fc"/><stop offset="1" stop-color="#c3d4f1"/></linearGradient></defs>
<path d="M2.900 0.800H39A2 2 0 0 1 41 2.800V16.100H36.200V5.600H5V37.200H15.800V41H2.900A2 2 0 0 1 0.900 39V2.800A2 2 0 0 1 2.900 0.800Z" fill="#000"/>
<rect x="5" y="5.600" width="31.200" height="31.600" fill="url(#g1)"/>
<rect x="9.400" y="10" width="4.400" height="2" rx="0.800" fill="#000"/><rect x="16.200" y="10" width="15.600" height="2" rx="0.800" fill="#000"/>
<rect x="9.400" y="14.600" width="4.400" height="2" rx="0.800" fill="#000"/><rect x="16.200" y="14.600" width="8.800" height="2" rx="0.800" fill="#000"/>
<rect x="9.400" y="19" width="4.400" height="2" rx="0.800" fill="#000"/>
<g transform="translate(31.900 32.500)" fill="#3b78de"><circle r="9.400"/><g id="tooth"><rect x="-2.450" y="-13.700" width="4.900" height="6"/></g><use href="#tooth" transform="rotate(45)"/><use href="#tooth" transform="rotate(90)"/><use href="#tooth" transform="rotate(135)"/><use href="#tooth" transform="rotate(180)"/><use href="#tooth" transform="rotate(225)"/><use href="#tooth" transform="rotate(270)"/><use href="#tooth" transform="rotate(315)"/><circle r="4.400" fill="#2e2a2a"/></g>
</svg>
<div class="lb">Eigenschaften</div></div>
<!-- 2 Verzeichnisse -->
<div class="li" style="top:75px">
<svg class="abs" style="left:43px;top:7px" width="50" height="50" viewBox="0 0 50 50">
<path d="M7.300 42.600L11 19.500L36.200 7.900L42.700 34.400Z" fill="#c5d7f2" stroke="#000" stroke-width="3.800" stroke-linejoin="round"/>
<g fill="#3b78de" stroke="#000" stroke-width="2.200"><circle cx="36.200" cy="7.900" r="5.200"/><circle cx="11" cy="19.500" r="5.200"/><circle cx="42.700" cy="34.400" r="5.200"/><circle cx="7.300" cy="42.600" r="5.200"/></g>
</svg>
<div class="lb">Verzeichnisse</div></div>
<!-- 3 Nahtzugabe -->
<div class="li" style="top:150px">
<svg class="abs" style="left:39px;top:6px" width="58" height="54" viewBox="0 0 58 54">
<g fill="#4a8dde"><path d="M6.600 9.100H20.300L23.900 11.400H10.200Z"/><path d="M18.600 16.100H32.300L35.800 18.600H22.100Z"/><path d="M30.100 23.900H44.300L47.800 26.300H33.600Z"/><path d="M33.600 31.200H48.200L45.100 33.700H30.500Z"/><path d="M23 38.300H38.100L34.500 40.800H19.900Z"/><path d="M12.400 46.100H27.400L23.900 48.500H8.800Z"/></g>
<path d="M3.500 7.700L35.400 28.500L4.400 50.200" fill="none" stroke="#1d261f" stroke-width="1.800"/>
<path d="M13.300 2.400L54.900 28.500L23 50.700" fill="none" stroke="#1d261f" stroke-width="1.800"/>
</svg>
<div class="lb" style="letter-spacing:0px">Nahtzugabe</div></div>
<!-- 4 Etiketten -->
<div class="li" style="top:225px">
<svg class="abs" style="left:42px;top:6px" width="54" height="54" viewBox="0 0 54 54">
<path d="M29 3.800L45.500 3.300C48 3.300 49.500 4.800 49.500 7.300L48.800 23.500C48.800 25 48.300 26 47.300 27L25.500 48.300C24 49.800 22 49.800 20.500 48.300L3.800 31.800C2.300 30.300 2.300 28.300 3.800 26.800L25.500 5.300C26.500 4.300 27.500 3.800 29 3.800Z" fill="#3e7ce0" stroke="#000" stroke-width="2.600" stroke-linejoin="round"/>
<path d="M48.300 19.500L47.800 24L46.800 26.300L25 47.600C23.800 48.700 22.300 48.700 21 47.600L18.300 44.800Z" fill="#3a62d6"/>
<circle cx="38.300" cy="14.400" r="4.400" fill="#7c7c7c" stroke="#000" stroke-width="2.200"/>
<g transform="translate(23.300 30)"><path d="M-1.92 -7.15 L-1.08 -10.24 L1.08 -10.24 L1.92 -7.15 L3.70 -6.41 L6.48 -8.00 L8.00 -6.48 L6.41 -3.70 L7.15 -1.92 L10.24 -1.08 L10.24 1.08 L7.15 1.92 L6.41 3.70 L8.00 6.48 L6.48 8.00 L3.70 6.41 L1.92 7.15 L1.08 10.24 L-1.08 10.24 L-1.92 7.15 L-3.70 6.41 L-6.48 8.00 L-8.00 6.48 L-6.41 3.70 L-7.15 1.92 L-10.24 1.08 L-10.24 -1.08 L-7.15 -1.92 L-6.41 -3.70 L-8.00 -6.48 L-6.48 -8.00 L-3.70 -6.41Z" fill="#d9e4f4" stroke="#6b7f9f" stroke-width="0.500" stroke-linejoin="round"/><circle r="4.300" fill="#e4ecf8" stroke="#1d3563" stroke-width="1.900"/></g>
</svg>
<div class="lb" style="letter-spacing:-0.05px">Etiketten</div></div>
<!-- 5 Anker -->
<div class="li" style="top:300px">
<svg class="abs" style="left:39px;top:1px" width="60" height="60" viewBox="0 0 60 60">
<path d="M37.900 14.300L41.300 6.800L53.900 19.100L44.700 22.800Z" fill="#7e7e7e" stroke="#000" stroke-width="3" stroke-linejoin="round"/>
<path d="M12.300 48.400L12.300 27.600L37.900 14.300L44.700 22.800L32.400 48.400Z" fill="#c5d7f2" stroke="#000" stroke-width="3" stroke-linejoin="round"/>
<path d="M13 47.700L23.800 36.900" stroke="#000" stroke-width="2.800" fill="none"/>
<circle cx="26" cy="34.800" r="3" fill="#dfe9f8" stroke="#000" stroke-width="2.700"/>
<circle cx="7.600" cy="53.200" r="4.200" fill="#3b78de"/>
</svg>
<div class="lb" style="letter-spacing:0.05px">Anker</div></div>
<!-- 6 Fadenlauf -->
<div class="li" style="top:375px">
<svg class="abs" style="left:27px;top:24px" width="82" height="18" viewBox="0 0 82 18">
<path d="M8 9H74" stroke="#000" stroke-width="3"/><path d="M0.500 9L12.500 2.500L11 9L12.500 15.500Z M81.500 9L69.500 2.500L71 9L69.500 15.500Z" fill="#000"/><circle cx="41" cy="9" r="6.200" fill="#3b78de"/>
</svg>
<div class="lb">Fadenlauf</div></div>
<!-- 7 Markierungen -->
<div class="li" style="top:450px">
<svg class="abs" style="left:38px;top:9.500px" width="62" height="47" viewBox="0 0 62 47">
<rect x="0" y="0.500" width="60" height="10.500" fill="#000"/>
<rect x="12.500" y="10.500" width="9" height="33.500" fill="#3b78de" stroke="#000" stroke-width="1.600"/><rect x="38.500" y="10.500" width="9" height="33.500" fill="#3b78de" stroke="#000" stroke-width="1.600"/>
</svg>
<div class="lb" style="letter-spacing:0.05px">Markierungen</div></div>
</div>
<div id="panel">
<!-- coordinates inside panel are page coords minus (220,162) -->
<div class="cb" style="left:9px;top:12px"></div><div class="t" style="left:27.500px;top:13px;letter-spacing:0.100px">Integriert</div>
<div class="cb on" style="left:9px;top:38px"><svg width="11" height="11" viewBox="0 0 11 11" style="position:absolute;left:0;top:0"><path d="M2.300 5.600L4.500 7.800L8.800 3.300" fill="none" stroke="#fff" stroke-width="1.100"/></svg></div><div class="t" style="left:27.500px;top:39px;letter-spacing:-0.080px">Schnittlinie anzeigen</div>
<div class="cb" style="left:9px;top:64px"></div><div class="t" style="left:27.500px;top:65px;letter-spacing:-0.030px">Nahtlinie ausblenden</div>
<!-- tabs -->
<div class="abs" style="left:101px;top:89px;width:112px;height:22px;background:#f3f3f3;border:1px solid #e5e5e5;border-bottom:none"></div>
<div class="t" style="left:112.500px;top:94px;letter-spacing:-0.010px">Benutzerdefiniert</div>
<div class="abs" style="left:9px;top:110px;width:566px;height:453px;background:#f9f9f9;border:1px solid #ebebeb"></div>
<div class="abs" style="left:9px;top:87px;width:93px;height:25px;background:#f9f9f9;border:1px solid #ebebeb;border-bottom:none"></div>
<div class="t" style="left:21px;top:93px;letter-spacing:0.050px">Automatisch</div>
<!-- group Standard -->
<div class="grp" style="left:20px;top:129px;width:544px;height:115px"></div>
<div class="t" style="left:27px;top:123px;font-weight:bold;background:#f9f9f9;padding:0 3px;letter-spacing:-0.200px">Standard</div>
<div class="t" style="left:60px;top:151px;width:60px;text-align:right;letter-spacing:-0.150px">Breite:</div>
<div class="t" style="left:126.500px;top:151px;letter-spacing:-0.150px">1 cm</div>
<div class="fx" style="left:528px;top:148px"><svg width="23" height="16" viewBox="0 0 23 16" style="position:absolute;left:0;top:0"><text x="5" y="11.500" style="font-family:'Liberation Serif',serif;font-style:italic;font-weight:bold;font-size:13px" fill="#1c1c1c">f</text><text x="9.600" y="11.300" style="font-family:'Liberation Serif',serif;font-style:italic;font-weight:bold;font-size:7.500px" fill="#4a4a4a">(x)</text></svg></div>
<div class="ta" style="left:126px;top:173px;width:428px;height:62px"></div>
<div class="t" style="left:131.500px;top:180px;color:#222">1</div>
<!-- group Knoten -->
<div class="grp" style="left:20px;top:259px;width:544px;height:291px"></div>
<div class="t" style="left:27px;top:253px;font-weight:bold;background:#f9f9f9;padding:0 3px;letter-spacing:-0.350px">Knoten</div>
<div class="t" style="left:60px;top:281px;width:60px;text-align:right;letter-spacing:-0.150px">Knoten:</div>
<div class="cmb" style="left:126px;top:277px;width:428px;height:22px"><svg class="abs" style="right:3px;top:8px" width="10" height="6" viewBox="0 0 10 6"><path d="M0.800 0.800L5 5L9.200 0.800" fill="none" stroke="#444" stroke-width="1"/></svg></div>
<div class="t" style="left:130px;top:281px;letter-spacing:-0.150px">A57</div>
<div class="t" style="left:60px;top:309px;width:60px;text-align:right;letter-spacing:-0.150px">Vorher:</div>
<div class="t" style="left:126.500px;top:309px;letter-spacing:-0.150px">1 cm</div>
<div class="btn" style="left:414px;top:306px;width:106px;height:18px;border-color:#dedede;background:#f7f7f7"></div>
<div class="t" style="left:418px;top:308.500px;color:#7c7c7c;font-size:11px;letter-spacing:-0.150px">Standard verwenden</div>
<div class="fx" style="left:528px;top:306px"><svg width="23" height="16" viewBox="0 0 23 16" style="position:absolute;left:0;top:0"><text x="5" y="11.500" style="font-family:'Liberation Serif',serif;font-style:italic;font-weight:bold;font-size:13px" fill="#1c1c1c">f</text><text x="9.600" y="11.300" style="font-family:'Liberation Serif',serif;font-style:italic;font-weight:bold;font-size:7.500px" fill="#4a4a4a">(x)</text></svg></div>
<div class="ta" style="left:126px;top:331px;width:428px;height:62px"></div>
<div class="t" style="left:131px;top:336px;height:16px;line-height:15px;background:#ebebeb;padding:1.5px 1px 0 0.5px;letter-spacing:-0.030px">AktuelleNahtzugabe</div>
<div class="t" style="left:60px;top:403px;width:60px;text-align:right;letter-spacing:-0.150px">Nachher:</div>
<div class="t" style="left:126.500px;top:403px;letter-spacing:-0.150px">1 cm</div>
<div class="btn" style="left:414px;top:400px;width:106px;height:18px;border-color:#dedede;background:#f7f7f7"></div>
<div class="t" style="left:418px;top:402.500px;color:#7c7c7c;font-size:11px;letter-spacing:-0.150px">Standard verwenden</div>
<div class="fx" style="left:528px;top:400px"><svg width="23" height="16" viewBox="0 0 23 16" style="position:absolute;left:0;top:0"><text x="5" y="11.500" style="font-family:'Liberation Serif',serif;font-style:italic;font-weight:bold;font-size:13px" fill="#1c1c1c">f</text><text x="9.600" y="11.300" style="font-family:'Liberation Serif',serif;font-style:italic;font-weight:bold;font-size:7.500px" fill="#4a4a4a">(x)</text></svg></div>
<div class="ta" style="left:126px;top:425px;width:428px;height:62px"></div>
<div class="t" style="left:131.500px;top:431.500px;height:15px;line-height:15px;letter-spacing:-0.030px">AktuelleNahtzugabe</div>
<div class="t" style="left:60px;top:498px;width:60px;text-align:right;letter-spacing:-0.150px">Winkel:</div>
<div class="cmb" style="left:126px;top:493px;width:428px;height:22px"><svg class="abs" style="right:3px;top:8px" width="10" height="6" viewBox="0 0 10 6"><path d="M0.800 0.800L5 5L9.200 0.800" fill="none" stroke="#444" stroke-width="1"/></svg></div>
<div class="t" style="left:130px;top:498px;letter-spacing:-0.150px">nach Länge</div>
</div>
<!-- title + buttons -->
<svg class="abs" style="left:69px;top:124px" width="19" height="20" viewBox="0 0 19 20"><path d="M4.500 3C4.500 1.500 8 1.200 9 2.500L11.500 5.500V10.500L12 17.500H8L7 14.500L6 18H1.500L2 11.500L4.500 9.500Z" fill="#fff" stroke="#e9e9e9" stroke-width="0.600"/><path d="M11.500 10.200H14.500V12.700H17V15.700H14.500V18.200H11.500V15.700H9V12.700H11.500Z" fill="#5a962c"/><path d="M11.500 10.200H14.500V12.700H17V14.200H9V12.700H11.500Z" fill="#7db050"/></svg>
<div class="t" style="left:92px;top:127.500px;letter-spacing:-0.050px">Schnittteil Werkzeug</div>
<svg class="abs" style="left:797px;top:128px" width="12" height="12" viewBox="0 0 12 12"><path d="M0.800 0.800L11.200 11.200M11.200 0.800L0.800 11.200" stroke="#111" stroke-width="1.100" fill="none"/></svg>
<div class="btn" style="left:571px;top:743px;width:73px;height:22px;border-color:#0067c0"></div><div class="t" style="left:571px;top:747.500px;width:73px;text-align:center;font-size:12.500px">OK</div>
<div class="btn" style="left:652px;top:743px;width:73px;height:22px"></div><div class="t" style="left:652px;top:747.500px;width:73px;text-align:center;letter-spacing:-0.150px">Abbrechen</div>
<div class="btn" style="left:733px;top:743px;width:73px;height:22px"></div><div class="t" style="left:733px;top:747.500px;width:73px;text-align:center;letter-spacing:-0.150px">Anwenden</div>

</body>
</html>
